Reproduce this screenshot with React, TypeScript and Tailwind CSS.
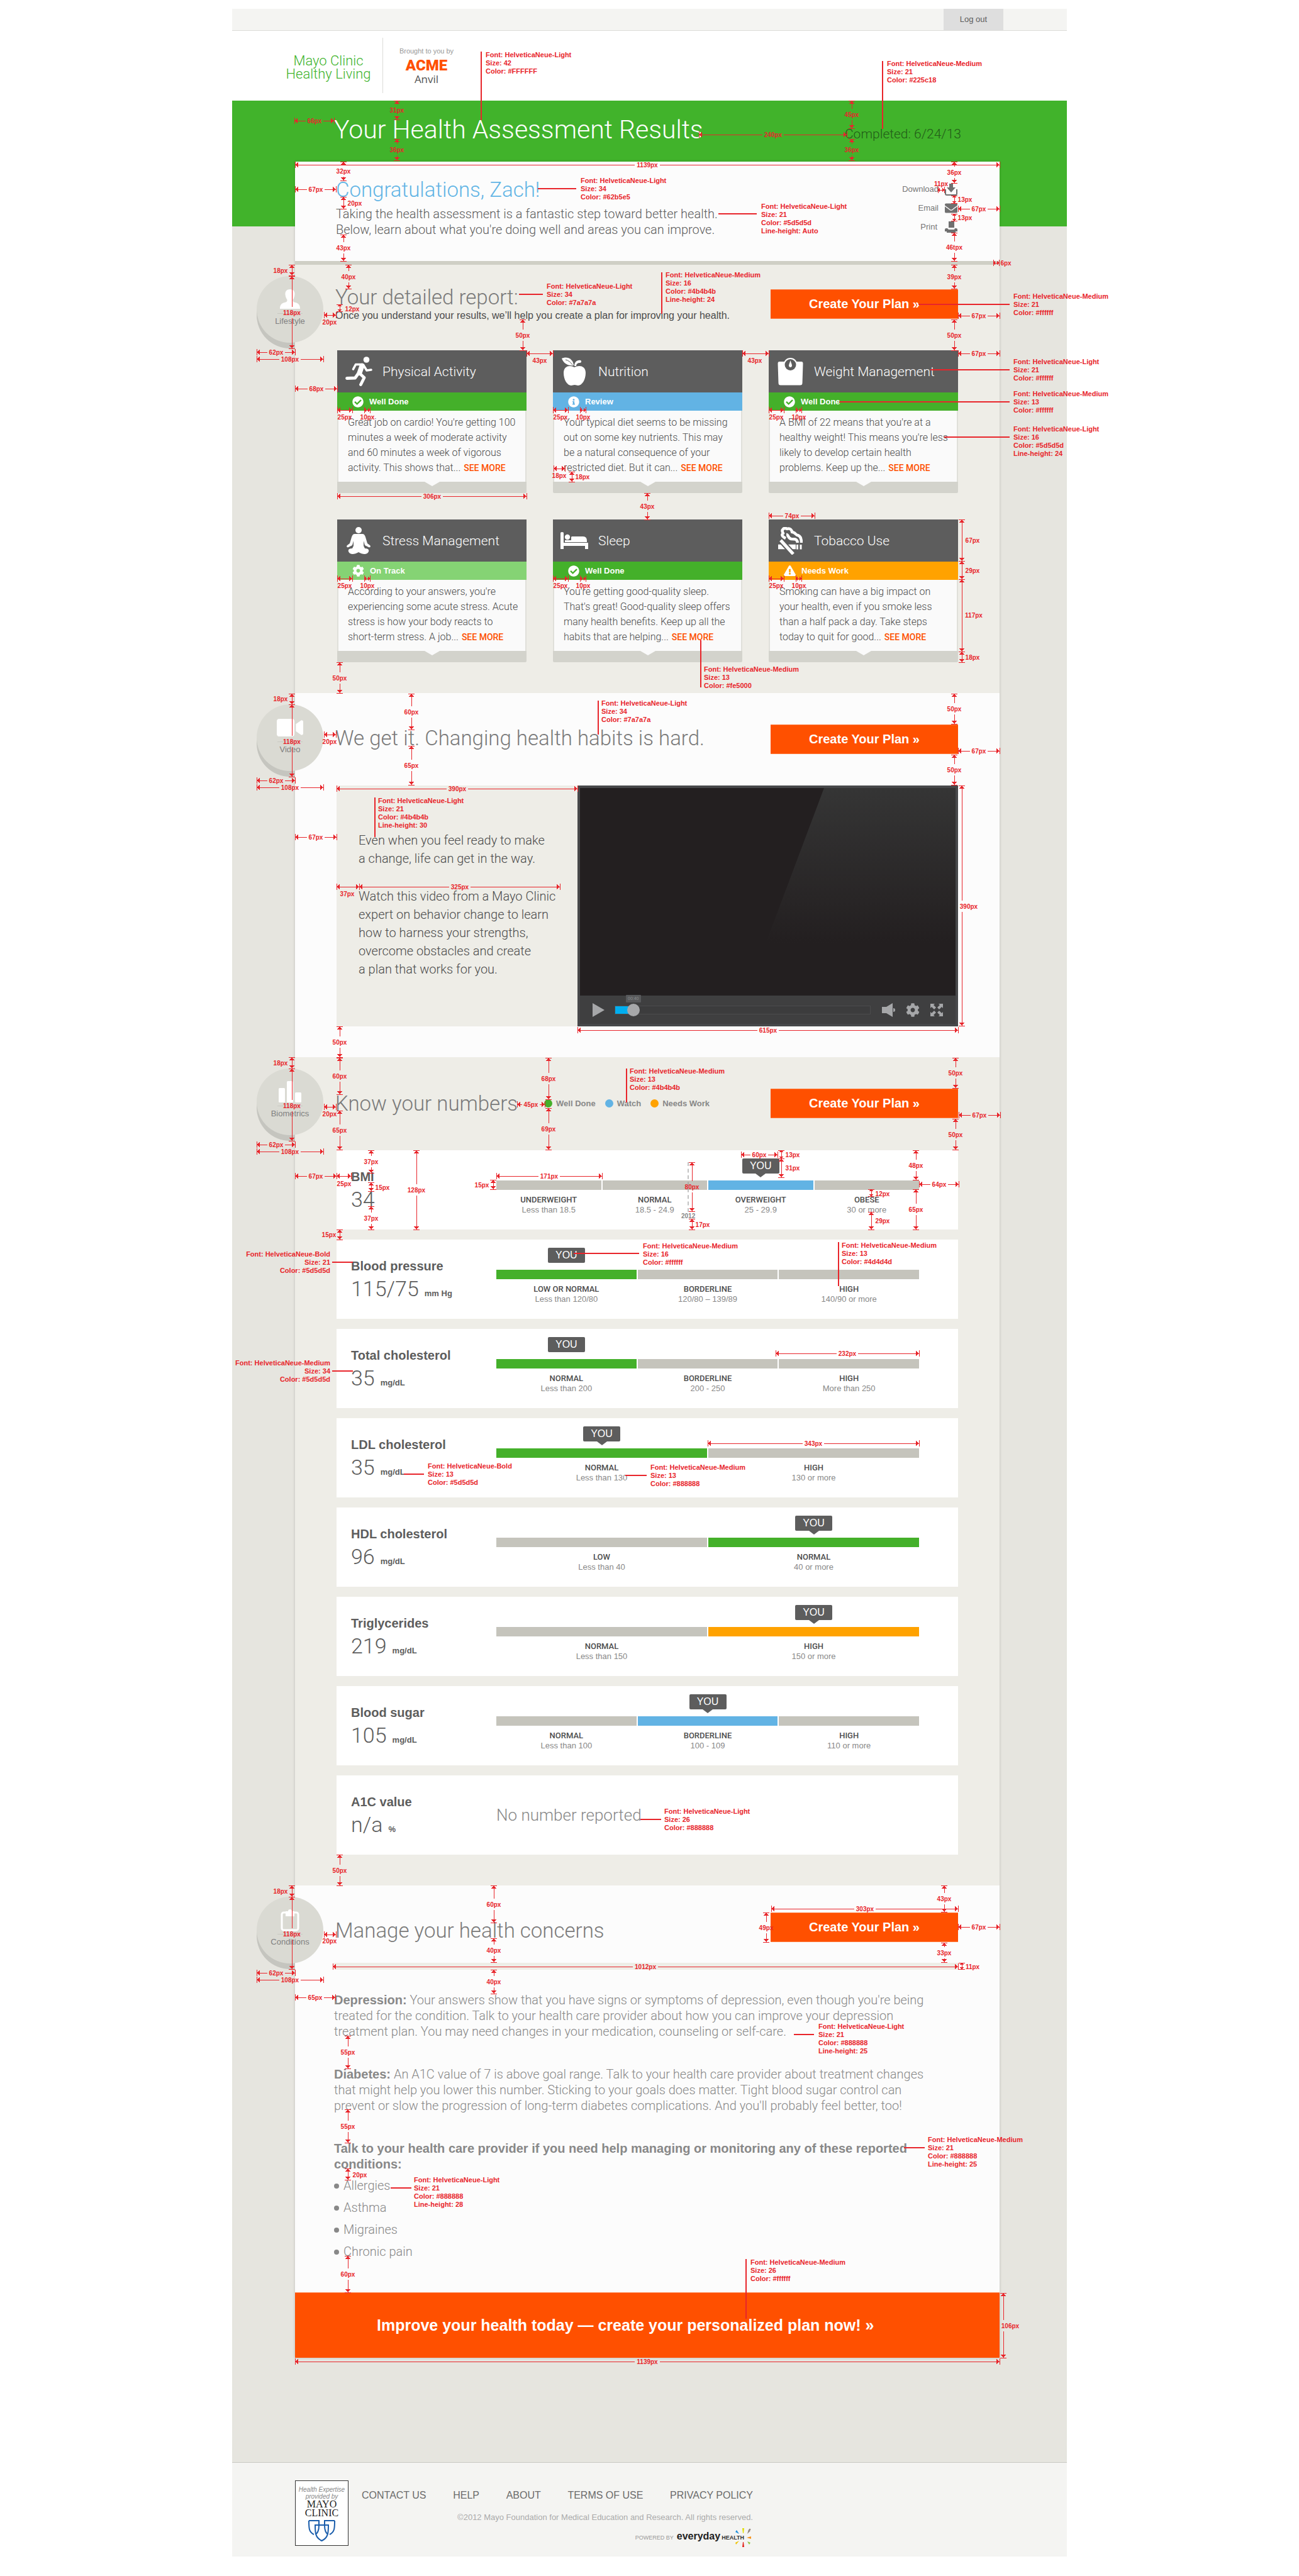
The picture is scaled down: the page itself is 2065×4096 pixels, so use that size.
import type { ReactNode } from 'react';
import {
  FaCheckCircle,
  FaCog,
  FaEnvelope,
  FaExclamationTriangle,
  FaInfoCircle,
  FaVideo,
} from 'react-icons/fa';

/* ---------- pictograms ---------- */

const Runner = () => (
  <svg width="43" height="47" viewBox="0 0 43 47" fill="none" stroke="#fff" strokeLinecap="round" strokeLinejoin="round">
    <circle cx="33.5" cy="5" r="4.8" fill="#fff" stroke="none" />
    <path d="M12.5 20 16.5 12.5 25 12.5" strokeWidth="3.6" />
    <path d="M26.5 14.5 22.5 26" strokeWidth="8" />
    <path d="M29 14 34 22 41 21" strokeWidth="3.6" />
    <path d="M23 27 30 33.5 24.5 44.5" strokeWidth="4.8" />
    <path d="M20.5 27 15.5 34 2.5 34.5" strokeWidth="4.8" />
  </svg>
);

const Apple = () => (
  <svg width="40" height="46" viewBox="0 0 40 46" fill="#fff">
    <path d="M20 16C14 12 3 13 3 25c0 11 6 20 12 20 2 0 3-1 5.500-1s3.500 1 5.500 1c6 0 12-9 12-20 0-12-11-13-18-9z" />
    <path d="M0 2C8-2 18 2 19 13 10 14 3 10 0 2z" />
    <path d="M20 14c0-6 4-10 10-9 2 1 1 4-1 4-4 0-6 2-6 5z" />
    <path d="M6 4c5 1 8 4 11 8" stroke="#5d5d5d" strokeWidth="1" fill="none" />
  </svg>
);

const Scale = () => (
  <svg width="41" height="44" viewBox="0 0 41 44">
    <path d="M3 6h35q2.500 0 2.500 3l-1 31q0 3.500-3.500 3.500H5q-3.500 0-3.500-3.500L.5 9q0-3 2.500-3z" fill="#fff" />
    <circle cx="20.5" cy="11" r="11" fill="#fff" />
    <circle cx="20.5" cy="11" r="9" fill="#5d5d5d" />
    <path d="M20.500 4c1 4 2.500 6 2.500 8.500a2.500 2.500 0 0 1-5 0c0-2.500 1.500-4.500 2.500-8.500z" fill="#fff" />
  </svg>
);

const Meditation = () => (
  <svg width="38" height="44" viewBox="0 0 38 44" fill="#fff">
    <circle cx="19" cy="5" r="5" />
    <path d="M13 11h12c3 0 4 2 5 5l3 10 4 3c2 2 0 4-2 3l-6-3-2-7v8l2 4c5 0 7 2 6 5-2 5-9 5-16 1-7 4-14 4-16-1-1-3 1-5 6-5l2-4v-8l-2 7-6 3c-2 1-4-1-2-3l4-3 3-10c1-3 2-5 5-5z" />
  </svg>
);

const Bed = () => (
  <svg width="44" height="28" viewBox="0 0 44 28" fill="#fff">
    <path d="M0 1q2.500-2 5 0v16h39v10h-5v-5H5v5H0z" />
    <circle cx="11" cy="8" r="4.200" />
    <path d="M7 13h10v3H7zM18 7h18q6 0 6 7v2H17V8z" />
  </svg>
);

const Tobacco = () => (
  <svg width="40" height="44" viewBox="0 0 40 44" fill="none" stroke="#fff">
    <path d="M13 18C7 15 6 12 9 10 5 4 11 0 15 3c5-2 8 2 8 5 5 0 6 5 9 5 4 1 6 4 6 12" strokeWidth="4.500" strokeLinejoin="round" />
    <path d="M14 12c4 0 2 6 8 7 6 0 9 0 10 6" strokeWidth="4.500" />
    <path d="M1 31.500h28" strokeWidth="7.500" />
    <path d="M31.500 28v7.500M37 28v7.500" strokeWidth="3" />
    <path d="M5 21 25 43" stroke="#5d5d5d" strokeWidth="9" />
    <path d="M5 21 25 43" strokeWidth="5" />
  </svg>
);

const Person = () => (
  <svg width="32" height="31" viewBox="0 0 32 31" fill="#fff">
    <path d="M16 0c5 0 8 3 7.500 8.500-.5 4-1.500 6-3 8 0 3 .5 3.500 4 4.500 5 1.500 7.500 3.500 7.500 10H0c0-6.500 2.500-8.500 7.500-10 3.500-1 4-1.500 4-4.500-1.500-2-2.500-4-3-8C8 3 11 0 16 0z" />
  </svg>
);

const Bars = () => (
  <svg width="36" height="34" viewBox="0 0 36 34" fill="#fff">
    <rect x="0" y="11" width="10" height="23" rx="1.500" />
    <rect x="13" y="0" width="10" height="34" rx="1.500" />
    <rect x="26" y="18" width="10" height="16" rx="1.500" />
  </svg>
);

const Clipboard = () => (
  <svg width="30" height="36" viewBox="0 0 30 36" fill="none">
    <rect x="2" y="6" width="26" height="28" rx="3" stroke="#fff" strokeWidth="3" />
    <path d="M8 4h4a3 3 0 0 1 6 0h4v8H8z" fill="#fff" />
  </svg>
);

const DownloadIcon = () => (
  <svg width="20" height="19" viewBox="0 0 20 19">
    <path d="M7 0h6v6h4l-7 8-7-8h4z" fill="#707070" />
    <path d="M1 9v7q0 2 2 2h14q2 0 2-2V9" fill="none" stroke="#707070" strokeWidth="2" />
  </svg>
);

const PrintIcon = () => (
  <svg width="20" height="19" viewBox="0 0 20 19" fill="#707070">
    <path d="M6 0h9v10H6zM0 13q0-2 2-2h2l2 2h9l1-2h2q2 0 2 2v3h-3v2H3v-2H0z" />
  </svg>
);

const Shields = () => (
  <svg width="43" height="34" viewBox="0 0 43 34" fill="none" stroke="#1a5dab" strokeWidth="2">
    <path d="M1 1h16v3M1 1c0 12 0 18 8 22M42 1H26v3M42 1c0 12 0 18-8 22" />
    <path d="M11 8h21c0 12 0 20-10.500 25C11 28 11 20 11 8z" />
    <path d="M17 4c0 8 0 14-4 18M26 4c0 8 0 14 4 18" />
  </svg>
);

const Burst = () => (
  <svg width="30" height="32" viewBox="0 0 30 32">
    <path d="M14 1h3l-1 8h-1z" fill="#e3df00" />
    <path d="m24 3 3 2-5 5z" fill="#94877b" />
    <circle cx="26" cy="3" r="1.300" fill="#94877b" />
    <path d="M28 14v4l-7-2z" fill="#f7941d" />
    <path d="m25 27 2-3-5-2z" fill="#8cc63f" />
    <path d="M14 31h3l-1-8h-1z" fill="#e2231a" />
    <path d="m4 27-1-3 6-3z" fill="#eec200" />
    <path d="m3 7 2-3 4 6z" fill="#1c8fdc" />
  </svg>
);

/* ---------- page parts ---------- */

const PlanButton = () => (
  <button type="button" className="h-[47px] w-[298px] shrink-0 border-y border-[#ff7a3c] bg-[#ff5000] font-['Liberation_Sans',sans-serif] text-[20px] leading-[45px] font-bold text-white">
    Create Your Plan »
  </button>
);

const Badge = ({ icon, label }: { icon: ReactNode; label: string }) => (
  <div className="absolute top-[18px] -left-[61px] size-[106px]">
    <div className="absolute top-0 left-0 h-[116px] w-[61px] overflow-hidden">
      <div className="mt-[9px] size-[106px] rounded-full bg-[#c5c5bf]" />
    </div>
    <div className="relative flex size-[106px] flex-col items-center rounded-full bg-[#dadad3] pt-[20px]">
      <div className="flex h-[33px] items-center">{icon}</div>
      <div className="mt-[6px] w-[40px] border-t border-[#c9c9c2]" />
      <p className="mt-[3px] font-['Liberation_Sans',sans-serif] text-[13px] leading-[18px] text-[#808080]">{label}</p>
    </div>
  </div>
);

const Title = ({ children }: { children: ReactNode }) => (
  <h2 className="-ml-[2px] text-[33px] leading-[36px] font-light text-[#7a7a7a]">{children}</h2>
);

type Status = 'done' | 'review' | 'track' | 'work';

const STATUS: Record<Status, { label: string; bar: string; icon: ReactNode }> = {
  done: { label: 'Well Done', bar: 'bg-[#44b02a]', icon: <FaCheckCircle size={18} /> },
  review: { label: 'Review', bar: 'bg-[#62b3e4]', icon: <FaInfoCircle size={18} /> },
  track: { label: 'On Track', bar: 'bg-[#85d374]', icon: <FaCog size={19} /> },
  work: { label: 'Needs Work', bar: 'bg-[#ffa200]', icon: <FaExclamationTriangle size={19} /> },
};

const REPORT: { title: string; icon: ReactNode; status: Status; lines: string[] }[] = [
  { title: 'Physical Activity', icon: <Runner />, status: 'done', lines: ["Great job on cardio! You're getting 100", 'minutes a week of moderate activity', 'and 60 minutes a week of vigorous', 'activity. This shows that...'] },
  { title: 'Nutrition', icon: <Apple />, status: 'review', lines: ['Your typical diet seems to be missing', 'out on some key nutrients. This may', 'be a natural consequence of your', 'restricted diet. But it can...'] },
  { title: 'Weight Management', icon: <Scale />, status: 'done', lines: ["A BMI of 22 means that you're at a", "healthy weight! This means you're less", 'likely to develop certain health', 'problems. Keep up the...'] },
  { title: 'Stress Management', icon: <Meditation />, status: 'track', lines: ["According to your answers, you're", 'experiencing some acute stress. Acute', 'stress is how your body reacts to', 'short-term stress. A job...'] },
  { title: 'Sleep', icon: <Bed />, status: 'done', lines: ["You're getting good-quality sleep.", "That's great! Good-quality sleep offers", 'many health benefits. Keep up all the', 'habits that are helping...'] },
  { title: 'Tobacco Use', icon: <Tobacco />, status: 'work', lines: ['Smoking can have a big impact on', 'your health, even if you smoke less', 'than a half pack a day. Take steps', 'today to quit for good...'] },
];

const ReportCard = ({ title, icon, status, lines }: (typeof REPORT)[number]) => {
  const s = STATUS[status];
  return (
    <article>
      <header className="flex h-[67px] items-center bg-[#5d5d5d] text-white">
        <div className="flex w-[72px] justify-center pr-[4px]">{icon}</div>
        <h3 className="text-[21px] leading-[26px] font-light">{title}</h3>
      </header>
      <div className={`flex h-[29px] items-center gap-[9px] pl-[24px] text-white ${s.bar}`}>
        {s.icon}
        <span className="font-['Liberation_Sans',sans-serif] text-[13px] font-bold">{s.label}</span>
      </div>
      <div className="h-[113px] border-x-2 border-[#e0e0da] bg-[#fafafa] pt-[7px] pl-[15px] text-[16px] leading-[24px] font-light whitespace-nowrap text-[#4b4b4b]">
        {lines.map((line, i) => (
          <p key={line}>
            {line}
            {i === lines.length - 1 && (
              <a href="#more" className="ml-[5px] text-[14px] font-medium text-[#fe5000]">SEE MORE</a>
            )}
          </p>
        ))}
      </div>
      <div className="flex h-[18px] justify-center rounded-b-[2px] bg-[#d3d3cc]">
        <svg width="24" height="7" viewBox="0 0 24 7"><path d="M0 0h24L12 7z" fill="#fafafa" /></svg>
      </div>
    </article>
  );
};

const GREY = 'bg-[#c5c4bc]';
const GREEN = 'bg-[#44b02a]';
const BLUE = 'bg-[#62b3e4]';
const ORANGE = 'bg-[#ffa200]';

type Range = { label: string; sub: string; color: string; you?: boolean };
type Metric = { name: string; value: string; unit?: string; tip?: boolean; ranges: Range[]; year?: boolean };

const METRICS: Metric[] = [
  { name: 'BMI', value: '34', tip: true, year: true, ranges: [
    { label: 'UNDERWEIGHT', sub: 'Less than 18.5', color: GREY },
    { label: 'NORMAL', sub: '18.5 - 24.9', color: GREY },
    { label: 'OVERWEIGHT', sub: '25 - 29.9', color: BLUE, you: true },
    { label: 'OBESE', sub: '30 or more', color: GREY }] },
  { name: 'Blood pressure', value: '115/75', unit: 'mm Hg', ranges: [
    { label: 'LOW OR NORMAL', sub: 'Less than 120/80', color: GREEN, you: true },
    { label: 'BORDERLINE', sub: '120/80 – 139/89', color: GREY },
    { label: 'HIGH', sub: '140/90 or more', color: GREY }] },
  { name: 'Total cholesterol', value: '35', unit: 'mg/dL', ranges: [
    { label: 'NORMAL', sub: 'Less than 200', color: GREEN, you: true },
    { label: 'BORDERLINE', sub: '200 - 250', color: GREY },
    { label: 'HIGH', sub: 'More than 250', color: GREY }] },
  { name: 'LDL cholesterol', value: '35', unit: 'mg/dL', tip: true, ranges: [
    { label: 'NORMAL', sub: 'Less than 130', color: GREEN, you: true },
    { label: 'HIGH', sub: '130 or more', color: GREY }] },
  { name: 'HDL cholesterol', value: '96', unit: 'mg/dL', tip: true, ranges: [
    { label: 'LOW', sub: 'Less than 40', color: GREY },
    { label: 'NORMAL', sub: '40 or more', color: GREEN, you: true }] },
  { name: 'Triglycerides', value: '219', unit: 'mg/dL', tip: true, ranges: [
    { label: 'NORMAL', sub: 'Less than 150', color: GREY },
    { label: 'HIGH', sub: '150 or more', color: ORANGE, you: true }] },
  { name: 'Blood sugar', value: '105', unit: 'mg/dL', tip: true, ranges: [
    { label: 'NORMAL', sub: 'Less than 100', color: GREY },
    { label: 'BORDERLINE', sub: '100 - 109', color: BLUE, you: true },
    { label: 'HIGH', sub: '110 or more', color: GREY }] },
  { name: 'A1C value', value: 'n/a', unit: '%', ranges: [] },
];

const MetricRow = ({ name, value, unit, tip, ranges, year }: Metric) => (
  <li className="flex h-[126px] bg-white pr-[62px] pl-[23px]">
    <div className="w-[231px] shrink-0 pt-[29px] text-[#5d5d5d]">
      <h3 className="font-['Liberation_Sans',sans-serif] text-[20px] leading-[26px] font-bold">{name}</h3>
      <p className="mt-[5px] text-[34px] leading-[36px] font-light">
        {value}
        {unit && <span className="ml-[9px] font-['Liberation_Sans',sans-serif] text-[13px] font-bold">{unit}</span>}
      </p>
    </div>
    {ranges.length === 0 ? (
      <p className="pt-[48px] text-[26px] leading-[30px] font-light text-[#888888]">No number reported</p>
    ) : (
      <div className="relative flex flex-1 gap-[2px]">
        {ranges.map((r) => (
          <div key={r.label} className="flex-1 pt-[13px] text-center text-[13px]">
            <div className="flex h-[35px] flex-col items-center">
              {r.you && (
                <>
                  <span className="h-[24px] w-[59px] rounded-[2px] bg-[#5d5d5d] font-['Liberation_Sans',sans-serif] text-[16px] leading-[24px] text-white">YOU</span>
                  {tip && <svg width="16" height="6" viewBox="0 0 16 6"><path d="M0 0h16L8 6z" fill="#5d5d5d" /></svg>}
                </>
              )}
            </div>
            <div className={`h-[15px] ${r.color}`} />
            <p className="mt-[8px] leading-[16px] font-medium text-[#4d4d4d]">{r.label}</p>
            <p className="font-['Liberation_Sans',sans-serif] leading-[15px] text-[#888888]">{r.sub}</p>
          </div>
        ))}
        {year && (
          <div className="absolute top-[19px] left-[294px] flex flex-col items-center">
            <div className="h-[79px] border-l-2 border-dashed border-[#999999]/60" />
            <span className="font-['Liberation_Sans',sans-serif] text-[10px] leading-[14px] font-bold text-[#888888]">2012</span>
          </div>
        )}
      </div>
    )}
  </li>
);

const VideoPlayer = () => (
  <div className="flex h-[383px] flex-1 flex-col border-4 border-[#47484a] bg-[#231f20]">
    <svg className="min-h-0 w-full flex-1" viewBox="0 0 597 330" preserveAspectRatio="none" aria-hidden="true">
      <defs>
        <linearGradient id="glare" x1="0" y1="0" x2="0" y2="1">
          <stop offset="0" stopColor="#353535" />
          <stop offset="0.75" stopColor="#231f20" />
        </linearGradient>
      </defs>
      <path d="M388 0h209v330H264z" fill="url(#glare)" />
    </svg>
    <div className="flex h-[45px] items-center bg-[#3f3f40] pr-[20px] pl-[19px] text-[#a6a7a9]">
      <button type="button" aria-label="Play">
        <svg width="20" height="22" viewBox="0 0 20 22" fill="currentColor"><path d="M1 0 20 11 1 22z" /></svg>
      </button>
      <div className="relative ml-[16px] flex flex-1">
        <input
          type="range"
          aria-label="Seek"
          defaultValue={5}
          className="h-[14px] w-full appearance-none border border-[#4b4b4d] bg-[linear-gradient(to_right,#00aeef_24px,#3c3c3d_24px)] [&::-webkit-slider-thumb]:size-[20px] [&::-webkit-slider-thumb]:appearance-none [&::-webkit-slider-thumb]:rounded-full [&::-webkit-slider-thumb]:bg-[#a6a7a9]"
        />
        <span className="absolute -top-[17px] left-[18px] rounded-[1px] bg-[#58595b] px-[3px] font-['Liberation_Sans',sans-serif] text-[7px] leading-[12px] text-[#8d8e90]">00:40</span>
      </div>
      <div className="ml-[18px] flex items-center gap-[17px]">
        <button type="button" aria-label="Volume">
          <svg width="21" height="22" viewBox="0 0 21 22" fill="currentColor"><path d="M0 6h7l10-6v22L7 16H0zM18 8q3 0 3 3t-3 3z" /></svg>
        </button>
        <button type="button" aria-label="Settings"><FaCog size={22} /></button>
        <button type="button" aria-label="Full screen">
          <svg width="20" height="20" viewBox="0 0 20 20" fill="currentColor">
            <path d="M0 0h7L5 2l4 4-3 3-4-4-2 2zM20 0v7l-2-2-4 4-3-3 4-4-2-2zM0 20v-7l2 2 4-4 3 3-4 4 2 2zM20 20h-7l2-2-4-4 3-3 4 4 2-2z" />
          </svg>
        </button>
      </div>
    </div>
  </div>
);

/* ---------- specification overlay ---------- */

// horizontal: [x1, x2, y, label, labelX?, labelY?]
type Span = [number, number, number, string, number?, number?];

const cardMarks = (x: number, y: number): Span[] => [
  [x, x + 24, y, '25px', x + 12, y + 11],
  [x + 43, x + 52, y, '10px', x + 48, y + 11],
];

const ACROSS: Span[] = [
  [468, 531, 192, '66px'], [469, 534, 301, '67px'], [469, 1589, 262, '1139px'],
  [515, 534, 501, '20px', 524, 512], [408, 469, 560, '62px'], [408, 514, 571, '108px'],
  [469, 536, 618, '68px'], [837, 879, 562, '43px', 858, 573], [1180, 1222, 562, '43px', 1200, 573],
  [536, 837, 789, '306px'], [880, 898, 745, '18px', 889, 756],
  ...cardMarks(536, 652), ...cardMarks(879, 652), ...cardMarks(1222, 652),
  ...cardMarks(536, 920), ...cardMarks(879, 920), ...cardMarks(1222, 920),
  [1111, 1346, 214, '240px'], [1491, 1501, 302, '11px', 1496, 292], [1523, 1589, 332, '67px'],
  [1579, 1588, 418, '6px', 1599, 418], [1523, 1589, 502, '67px'], [1523, 1589, 562, '67px'],
  [1222, 1295, 820, '74px'],
  [515, 534, 1168, '20px', 524, 1179], [408, 469, 1241, '62px'], [408, 514, 1252, '108px'],
  [535, 918, 1254, '390px'], [469, 535, 1331, '67px'], [535, 571, 1410, '37px', 552, 1421],
  [571, 890, 1410, '325px'], [918, 1523, 1638, '615px'], [1523, 1589, 1194, '67px'],
  [1524, 1590, 1773, '67px'], [515, 534, 1760, '20px', 524, 1771], [408, 469, 1820, '62px'],
  [408, 514, 1831, '108px'], [469, 535, 1870, '67px'], [535, 558, 1870, '25px', 547, 1882],
  [822, 866, 1756, '45px'], [789, 957, 1870, '171px'], [1178, 1236, 1836, '60px'],
  [1461, 1524, 1883, '64px'], [1233, 1461, 2152, '232px'], [1125, 1461, 2295, '343px'],
  [515, 534, 3076, '20px', 524, 3086], [408, 469, 3137, '62px'], [408, 514, 3148, '108px'],
  [529, 1523, 3127, '1012px'], [469, 533, 3176, '65px'], [1226, 1523, 3035, '303px'],
  [1523, 1589, 3064, '67px'], [469, 1589, 3755, '1139px'],
];

// vertical: [y1, y2, x, label, labelX?, labelY?]
const DOWN: Span[] = [
  [160, 190, 631, '31px'], [221, 255, 631, '36px'], [257, 287, 546, '32px'], [313, 332, 546, '20px', 564, 323],
  [373, 415, 546, '43px'], [421, 438, 464, '18px', 446, 430], [421, 459, 554, '40px'],
  [484, 495, 540, '12px', 560, 491], [439, 554, 464, '118px', 464, 497], [508, 557, 831, '50px'],
  [750, 766, 909, '18px', 926, 758], [784, 826, 1029, '43px'], [1053, 1102, 540, '50px'],
  [160, 204, 1354, '45px'], [221, 255, 1354, '36px'], [257, 291, 1517, '36px'],
  [311, 323, 1517, '13px', 1534, 317], [340, 351, 1517, '13px', 1534, 346], [370, 415, 1517, '46tpx'],
  [421, 459, 1517, '39px'], [508, 557, 1517, '50px'],
  [826, 892, 1529, '67px', 1546, 859], [892, 921, 1529, '29px', 1546, 907],
  [921, 1036, 1529, '117px', 1548, 978], [1036, 1053, 1529, '18px', 1546, 1045],
  [1103, 1120, 464, '18px', 446, 1111], [1120, 1235, 464, '118px', 464, 1179],
  [1103, 1160, 654, '60px'], [1186, 1248, 654, '65px'], [1632, 1681, 540, '50px'],
  [1103, 1151, 1517, '50px'], [1200, 1248, 1517, '50px'], [1249, 1631, 1529, '390px', 1540, 1441],
  [1681, 1699, 464, '18px', 446, 1690], [1682, 1730, 1519, '50px'], [1779, 1828, 1519, '50px'],
  [1682, 1740, 540, '60px'], [1766, 1828, 540, '65px'], [1682, 1748, 872, '68px'], [1762, 1828, 872, '69px'],
  [1699, 1814, 464, '118px', 464, 1758], [1829, 1865, 590, '37px'], [1880, 1894, 590, '15px', 608, 1888],
  [1918, 1955, 590, '37px'], [1829, 1955, 662, '128px'], [1955, 1971, 540, '15px', 523, 1963],
  [1876, 1891, 784, '15px', 766, 1884], [1829, 1842, 1242, '13px', 1260, 1836],
  [1842, 1872, 1242, '31px', 1260, 1857], [1829, 1876, 1456, '48px'], [1891, 1955, 1456, '65px', 1456, 1923],
  [1891, 1902, 1385, '12px', 1403, 1898], [1927, 1955, 1385, '29px', 1403, 1941],
  [1848, 1926, 1100, '80px'], [1938, 1955, 1100, '17px', 1117, 1947],
  [2949, 2998, 540, '50px'], [2998, 3016, 464, '18px', 446, 3007], [3016, 3131, 464, '118px', 464, 3075],
  [2998, 3057, 785, '60px'], [3082, 3120, 785, '40px'], [3132, 3170, 785, '40px'],
  [3041, 3088, 1218, '49px'], [2998, 3040, 1501, '43px'], [3089, 3120, 1501, '33px'],
  [3121, 3131, 1529, '11px', 1546, 3127], [3237, 3289, 553, '55px'], [3354, 3407, 553, '55px'],
  [3448, 3466, 553, '20px', 572, 3458], [3587, 3645, 553, '60px'], [3646, 3749, 1595, '106px', 1606, 3698],
];

// text position, leader line [x1, y1, x2, y2], then the note's own lines
type Note = { x: number; y: number; leader: [number, number, number, number]; lines: string[]; right?: boolean };

const note = (
  x: number,
  y: number,
  leader: [number, number, number, number],
  weight: string,
  size: number,
  color: string,
  lineHeight?: string,
  right?: boolean,
): Note => ({
  x,
  y,
  leader,
  right,
  lines: [`Font: HelveticaNeue-${weight}`, `Size: ${size}`, `Color: ${color}`, ...(lineHeight ? [`Line-height: ${lineHeight}`] : [])],
});

const NOTES: Note[] = [
  note(772, 87, [765, 82, 765, 191], 'Light', 42, '#FFFFFF'),
  note(1410, 101, [1403, 97, 1403, 205], 'Medium', 21, '#225c18'),
  note(923, 287, [855, 300, 916, 300], 'Light', 34, '#62b5e5'),
  note(1210, 328, [1142, 340, 1203, 340], 'Light', 21, '#5d5d5d', 'Auto'),
  note(869, 455, [825, 468, 863, 468], 'Light', 34, '#7a7a7a'),
  note(1058, 437, [1052, 433, 1052, 499], 'Medium', 16, '#4b4b4b', '24'),
  note(1611, 471, [1460, 484, 1605, 484], 'Medium', 21, '#ffffff'),
  note(1611, 575, [1479, 588, 1605, 588], 'Light', 21, '#ffffff'),
  note(1611, 626, [1334, 639, 1605, 639], 'Medium', 13, '#ffffff'),
  note(1611, 682, [1501, 695, 1605, 695], 'Light', 16, '#5d5d5d', '24'),
  note(1119, 1064, [1114, 1018, 1114, 1093], 'Medium', 13, '#fe5000'),
  note(956, 1118, [951, 1114, 951, 1168], 'Light', 34, '#7a7a7a'),
  note(601, 1273, [596, 1268, 596, 1331], 'Light', 21, '#4b4b4b', '30'),
  note(1001, 1703, [996, 1699, 996, 1753], 'Medium', 13, '#4b4b4b'),
  note(525, 1994, [528, 2007, 561, 2007], 'Bold', 21, '#5d5d5d', undefined, true),
  note(525, 2167, [528, 2180, 561, 2180], 'Medium', 34, '#5d5d5d', undefined, true),
  note(1022, 1981, [912, 1993, 1016, 1993], 'Medium', 16, '#ffffff'),
  note(1338, 1980, [1333, 1975, 1333, 2045], 'Medium', 13, '#4d4d4d'),
  note(680, 2331, [642, 2344, 674, 2344], 'Bold', 13, '#5d5d5d'),
  note(1034, 2333, [994, 2346, 1028, 2346], 'Medium', 13, '#888888'),
  note(1056, 2880, [1018, 2893, 1051, 2893], 'Light', 26, '#888888'),
  note(1301, 3222, [1262, 3235, 1294, 3235], 'Light', 21, '#888888', '25'),
  note(1475, 3402, [1437, 3415, 1470, 3415], 'Medium', 21, '#888888', '25'),
  note(658, 3466, [621, 3479, 654, 3479], 'Light', 21, '#888888', '28'),
  note(1193, 3597, [1186, 3592, 1186, 3687], 'Medium', 26, '#ffffff'),
];

const RED = '#e8252b';

const Dimension = ({ span, vertical }: { span: Span; vertical?: boolean }) => {
  const [a, b, c, label, lx, ly] = span;
  const mid = Math.round((a + b) / 2);
  const tx = lx ?? (vertical ? c : mid);
  const ty = ly ?? (vertical ? mid : c);
  const centre = vertical ? ty : tx;
  const onLine = vertical ? Math.abs(tx - c) < 14 : Math.abs(ty - c) < 5 && tx < b;
  const gap = vertical ? 9 : label.length * 3 + 2;
  const parts: [number, number][] = onLine ? [[a, centre - gap], [centre + gap, b]] : [[a, b]];
  const h = b - a < 14 ? 3 : 5;
  return (
    <g>
      {parts.map(([p, q]) =>
        vertical ? <path key={p} d={`M${c} ${p}V${q}`} /> : <path key={p} d={`M${p} ${c}H${q}`} />,
      )}
      {vertical ? (
        <>
          <path d={`M${c - 5} ${a}h10M${c - 5} ${b}h10`} />
          <path stroke="none" fill={RED} d={`M${c} ${a}l4 ${h}h-8zM${c} ${b}l4 -${h}h-8z`} />
        </>
      ) : (
        <>
          <path d={`M${a} ${c - 5}v10M${b} ${c - 5}v10`} />
          <path stroke="none" fill={RED} d={`M${a} ${c}l${h} -4v8zM${b} ${c}l-${h} -4v8z`} />
        </>
      )}
      <text x={tx} y={ty + 4} textAnchor="middle" stroke="none" fill={RED}>{label}</text>
    </g>
  );
};

const SpecOverlay = () => (
  <div className="pointer-events-none absolute top-0 -left-[369px] h-[3800px] w-[2065px] font-['Liberation_Sans',sans-serif] font-bold text-[#e8252b]">
    <svg className="absolute inset-0 size-full text-[10px]" fill="none" stroke={RED} strokeWidth="1" shapeRendering="crispEdges">
      {ACROSS.map((s, i) => <Dimension key={i} span={s} />)}
      {DOWN.map((s, i) => <Dimension key={i} span={s} vertical />)}
      {NOTES.map(({ leader: [x1, y1, x2, y2] }, i) => <path key={i} d={`M${x1} ${y1}L${x2} ${y2}`} strokeWidth="2" />)}
    </svg>
    {NOTES.map(({ x, y, lines, right }, i) => (
      <div
        key={i}
        className={`absolute text-[11px] leading-[13px] whitespace-nowrap ${right ? '-translate-x-full text-right' : ''}`}
        style={{ left: x, top: y - 6 }}
      >
        {lines.map((l) => <p key={l}>{l}</p>)}
      </div>
    ))}
  </div>
);

/* ---------- page ---------- */

export default function App() {
  return (
    <div className="overflow-x-hidden bg-white pb-[31px] font-['Roboto',sans-serif]">
      <div className="relative mx-auto max-w-[1327px] pt-[14px]">
        <div className="flex h-[35px] justify-end border-b border-[#dcdcd8] bg-[#f4f4f2] pr-[101px]">
          <button type="button" className="w-[95px] bg-[#dedede] font-['Liberation_Sans',sans-serif] text-[13px] text-[#5d5d5d]">Log out</button>
        </div>

        <header className="flex h-[111px] pl-[84px]">
          <p className="w-[138px] pt-[37px] text-center text-[22px] leading-[21px] font-light whitespace-nowrap text-[#40b42c]">
            Mayo Clinic<br />Healthy Living
          </p>
          <div className="mt-[11px] ml-[17px] h-[88px] border-l border-[#dcdcd8]" />
          <div className="ml-[23px] w-[92px] pt-[25px] text-center whitespace-nowrap">
            <p className="font-['Liberation_Sans',sans-serif] text-[11px] leading-[14px] text-[#999999]">Brought to you by</p>
            <p className="pt-[4px] text-[24px] leading-[24px] font-black text-[#ff5000]">ACME</p>
            <p className="font-['Open_Sans',sans-serif] text-[17px] leading-[19px] text-[#555555]">Anvil</p>
          </div>
        </header>

        <div className="flex items-baseline justify-between bg-[#41b32b] pt-[22px] pr-[168px] pb-[130px] pl-[162px]">
          <h1 className="text-[41px] leading-[48px] font-light text-white">Your Health Assessment Results</h1>
          <p className="text-[21px] leading-[30px] font-light text-[#225c18]">Completed: 6/24/13</p>
        </div>

        <div className="-mt-[103px] bg-[linear-gradient(to_bottom,transparent_103px,#e6e5df_103px)] pr-[107px] pb-[166px] pl-[100px]">
          <main className="shadow-[0_0_4px_rgba(0,0,0,0.18)]">
            <section className="flex justify-between border-b-[6px] border-[#cfcfc5] bg-[#fcfcfc] pt-[25px] pr-[67px] pb-[37px] pl-[65px]">
              <div>
                <h2 className="text-[33px] leading-[40px] font-light text-[#62b5e5]">Congratulations, Zach!</h2>
                <p className="mt-[6px] text-[20px] leading-[25px] font-light text-[#5d5d5d]">
                  Taking the health assessment is a fantastic step toward better health.<br />
                  Below, learn about what you're doing well and areas you can improve.
                </p>
              </div>
              <ul className="mt-[9px] flex flex-col items-end gap-[10px] font-['Liberation_Sans',sans-serif] text-[13px] leading-[20px] text-[#777777]">
                <li><a href="#download" className="flex items-center gap-[10px]">Download<DownloadIcon /></a></li>
                <li><a href="#email" className="flex items-center gap-[10px]">Email<FaEnvelope size={20} color="#707070" /></a></li>
                <li><a href="#print" className="flex items-center gap-[12px]">Print<PrintIcon /></a></li>
              </ul>
            </section>

            <section className="relative bg-[#eeede7] pr-[66px] pb-[49px] pl-[67px]">
              <Badge icon={<Person />} label="Lifestyle" />
              <div className="-ml-px flex justify-between pt-[34px]">
                <div>
                  <Title>Your detailed report:</Title>
                  <p className="-ml-[2px] font-['Liberation_Sans',sans-serif] text-[16px] leading-[22px] text-[#4b4b4b]">Once you understand your results, we’ll help you create a plan for improving your health.</p>
                </div>
                <div className="mt-[5px]"><PlanButton /></div>
              </div>
              <div className="mt-[44px] grid grid-cols-3 gap-[42px]">
                {REPORT.map((r) => <ReportCard key={r.title} {...r} />)}
              </div>
            </section>

            <section className="relative bg-[#fcfcfc] px-[66px] pt-[50px] pb-[49px]">
              <Badge icon={<FaVideo size={42} color="#fff" />} label="Video" />
              <div className="flex justify-between">
                <div className="pt-[4px]"><Title>We get it. Changing health habits is hard.</Title></div>
                <PlanButton />
              </div>
              <div className="mt-[50px] flex">
                <div className="w-[383px] bg-[#eeede7] pt-[73px] pl-[35px] text-[20px] leading-[29px] font-light text-[#4b4b4b]">
                  <p>Even when you feel ready to make<br />a change, life can get in the way.</p>
                  <p className="mt-[31px]">Watch this video from a Mayo Clinic<br />expert on behavior change to learn<br />how to harness your strengths,<br />overcome obstacles and create<br />a plan that works for you.</p>
                </div>
                <VideoPlayer />
              </div>
            </section>

            <section className="relative bg-[#eeede7] px-[66px] pt-[50px] pb-[49px]">
              <Badge icon={<Bars />} label="Biometrics" />
              <div className="flex justify-between">
                <div className="flex h-[47px] items-center">
                  <Title>Know your numbers</Title>
                  <ul className="ml-[42px] flex gap-[15px] font-['Liberation_Sans',sans-serif] text-[13px] leading-[13px] font-bold text-[#888888]">
                    <li className="flex items-center gap-[6px]"><span className="size-[13px] rounded-full bg-[#44b02a]" />Well Done</li>
                    <li className="flex items-center gap-[6px]"><span className="size-[13px] rounded-full bg-[#62b3e4]" />Watch</li>
                    <li className="flex items-center gap-[6px]"><span className="size-[13px] rounded-full bg-[#ffa200]" />Needs Work</li>
                  </ul>
                </div>
                <PlanButton />
              </div>
              <ul className="mt-[51px] flex flex-col gap-[16px]">
                {METRICS.map((m) => <MetricRow key={m.name} {...m} />)}
              </ul>
            </section>

            <section className="relative bg-[#fcfcfc] pt-[43px] pr-[66px] pb-[47px] pl-[62px] text-[20px] leading-[25px] font-light text-[#888888]">
              <Badge icon={<Clipboard />} label="Conditions" />
              <div className="flex justify-between pl-[4px]">
                <div className="pt-[11px]"><Title>Manage your health concerns</Title></div>
                <PlanButton />
              </div>
              <div className="mt-[33px] h-[11px] bg-[#eeede7]" />
              <p className="mt-[36px]">
                <strong className="font-['Liberation_Sans',sans-serif] font-bold">Depression:</strong> Your answers show that you have signs or symptoms of depression, even though you're being<br />
                treated for the condition. Talk to your health care provider about how you can improve your depression<br />
                treatment plan. You may need changes in your medication, counseling or self-care.
              </p>
              <p className="mt-[43px]">
                <strong className="font-['Liberation_Sans',sans-serif] font-bold">Diabetes:</strong> An A1C value of 7 is above goal range. Talk to your health care provider about treatment changes<br />
                that might help you lower this number. Sticking to your goals does matter. Tight blood sugar control can<br />
                prevent or slow the progression of long-term diabetes complications. And you'll probably feel better, too!
              </p>
              <p className="mt-[43px] font-['Liberation_Sans',sans-serif] font-bold">
                Talk to your health care provider if you need help managing or monitoring any of these reported<br />conditions:
              </p>
              <ul className="mt-[4px] leading-[35px]">
                {['Allergies', 'Asthma', 'Migraines', 'Chronic pain'].map((c) => (
                  <li key={c} className="flex items-center gap-[7px]"><span className="size-[8px] rounded-full bg-[#888888]" />{c}</li>
                ))}
              </ul>
            </section>

            <a href="#plan" className="relative flex h-[104px] items-center border-t border-[#ff7a3c] bg-[#ff5000] pl-[130px] font-['Liberation_Sans',sans-serif] text-[25px] font-bold text-white">
              Improve your health today — create your personalized plan now! »
            </a>
          </main>
        </div>

        <footer className="flex h-[150px] border-t border-[#c9c9c3] bg-[#f4f4f2] pt-[28px] pl-[100px] font-['Liberation_Sans',sans-serif]">
          <div className="flex h-[104px] w-[85px] flex-col items-center border border-[#333333] bg-white pt-[8px] whitespace-nowrap">
            <p className="text-center text-[10px] leading-[11px] text-[#888888] italic">Health Expertise<br />provided by</p>
            <p className="text-center font-['Liberation_Serif',serif] text-[16px] leading-[14px] text-[#222222]">MAYO<br />CLINIC</p>
            <div className="mt-[4px]"><Shields /></div>
          </div>
          <div className="ml-[21px] w-[622px] pt-[14px]">
            <nav className="flex justify-between text-[16px] leading-[20px] text-[#6b6b6b]">
              <a href="#contact">CONTACT US</a>
              <a href="#help">HELP</a>
              <a href="#about">ABOUT</a>
              <a href="#terms">TERMS OF USE</a>
              <a href="#privacy">PRIVACY POLICY</a>
            </nav>
            <p className="mt-[16px] text-right text-[13px] leading-[18px] text-[#aaaaaa]">©2012 Mayo Foundation for Medical Education and Research. All rights reserved.</p>
            <p className="relative mt-[11px] flex items-baseline justify-end pr-[14px] leading-[20px]">
              <span className="text-[9px] text-[#999999]">POWERED BY</span>
              <span className="ml-[5px] text-[16px] font-bold text-[#222222]">everyday</span>
              <span className="ml-[2px] text-[9px] font-bold text-[#333333]">HEALTH</span>
              <span className="absolute -top-[4px] right-[1px]"><Burst /></span>
            </p>
          </div>
        </footer>

        <SpecOverlay />
      </div>
    </div>
  );
}
